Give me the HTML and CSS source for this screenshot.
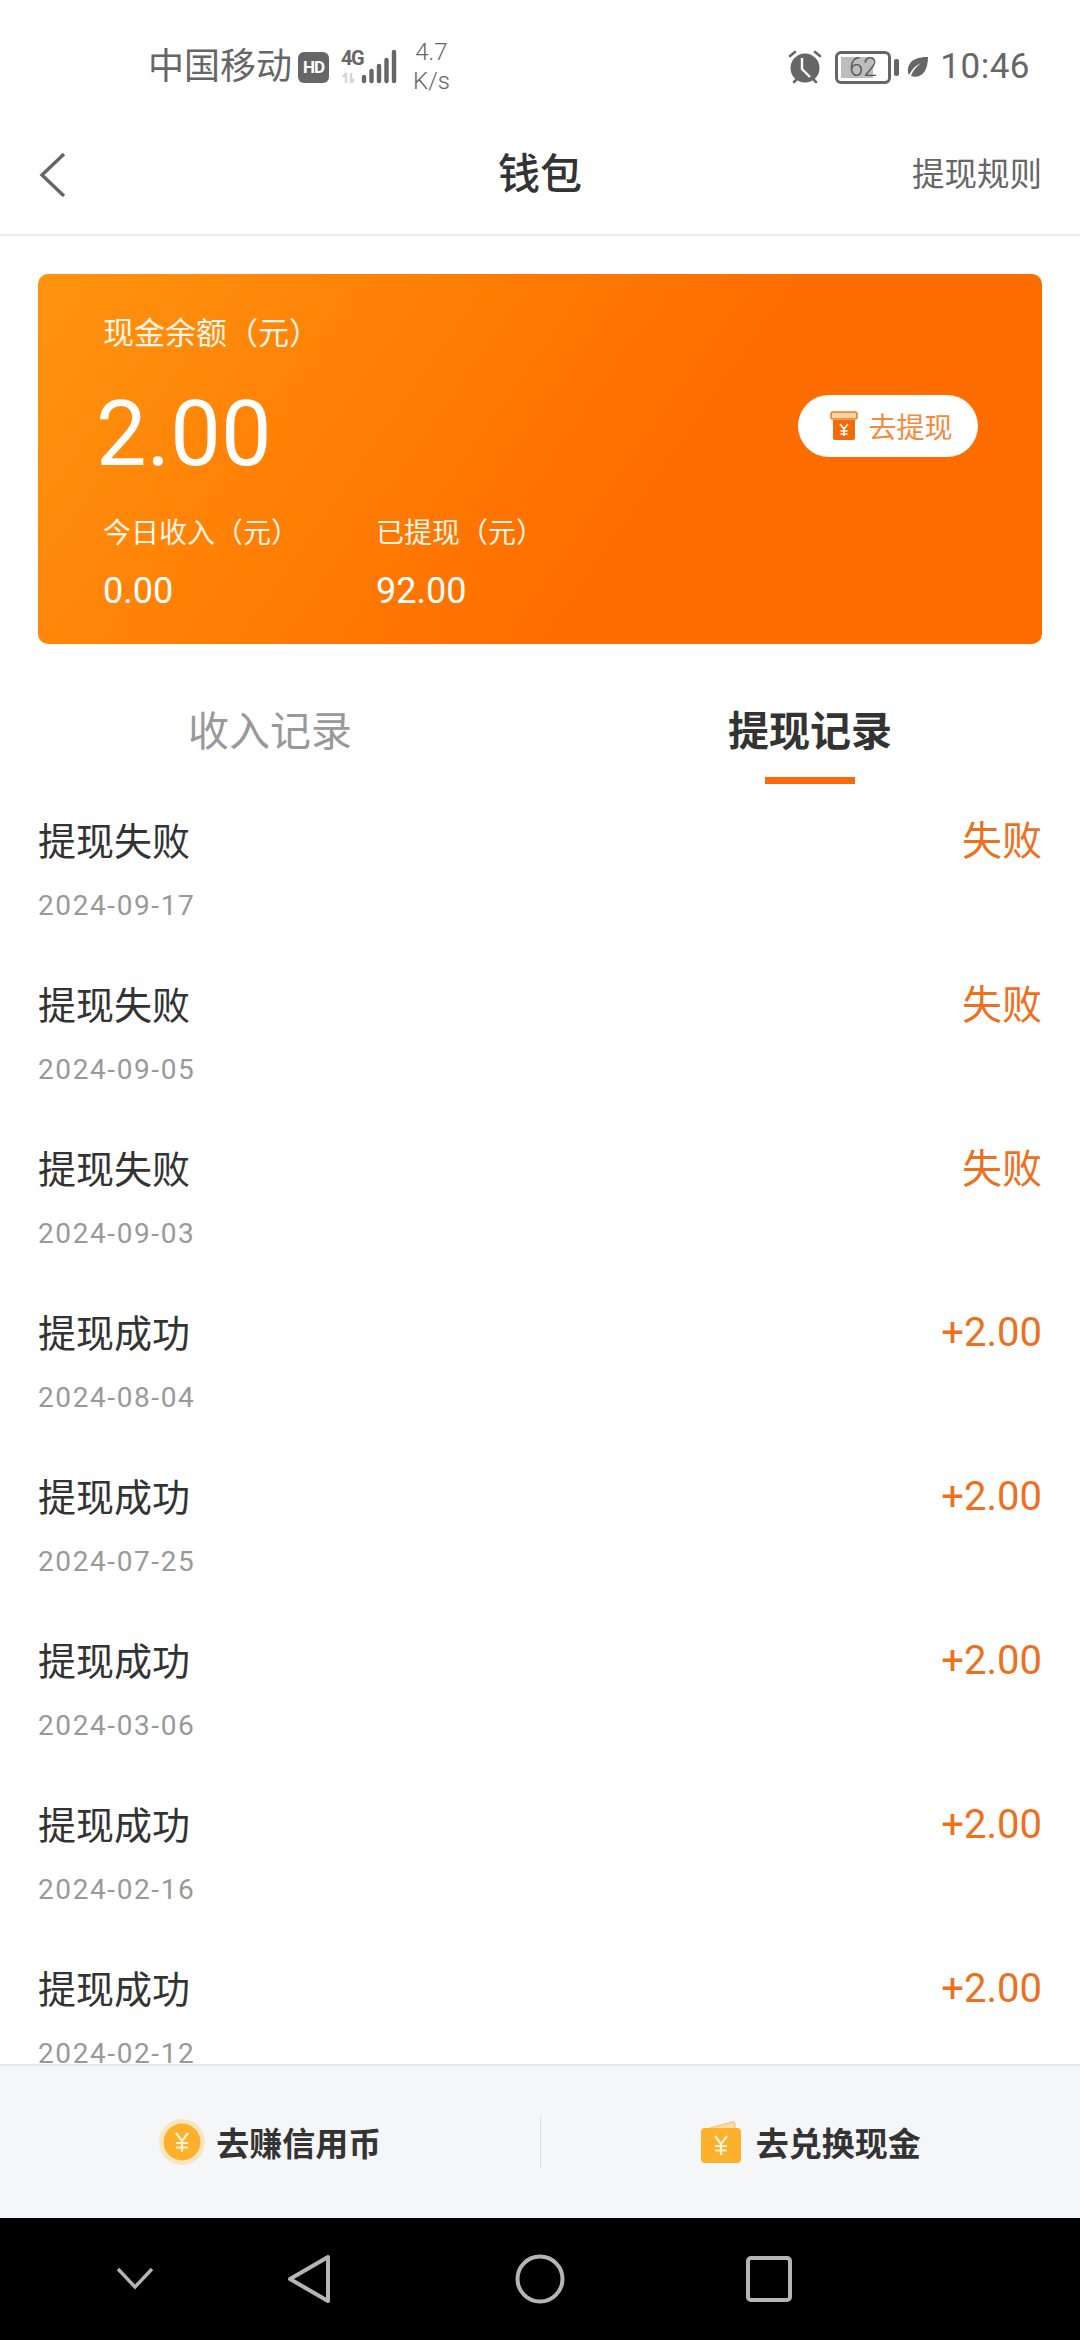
FILE: index.html
```html
<!DOCTYPE html>
<html lang="zh-CN">
    <head>
        <meta charset="UTF-8">
        <meta name="viewport" content="width=device-width, initial-scale=1.0">
        <title>钱包</title>
        <link rel="stylesheet" href="styles.css">
    </head>
    <body>
        <div class="page">
            <div class="status-bar">
                <div class="status-left">
                    <span class="carrier">中国移动</span>
                    <span class="hd-badge">HD</span>
                    <div class="signal">
                        <span class="signal-4g">4G</span>
                        <svg class="signal-arrows" width="14" height="12" viewBox="0 0 14 12">
                            <path d="M4 1v10M1 5l3-4M9 1v10M9 11l3-4" stroke="#d6d6d6" stroke-width="2.4" fill="none"/>
                        </svg>
                        <svg class="signal-bars" width="38" height="36" viewBox="0 0 38 36">
                            <g stroke="#666" stroke-width="4.4" stroke-linecap="round">
                                <path d="M4 28v4M11.500 22v10M19 17v15M26.500 11v21M34 3v29"/>
                            </g>
                        </svg>
                    </div>
                    <div class="net-speed"><span>4.7</span><span>K/s</span></div>
                </div>
                <div class="status-right">
                    <svg class="alarm" width="36" height="34" viewBox="0 0 36 34">
                        <circle cx="18" cy="18" r="14.500" fill="#666"/>
                        <path d="M3 6l5-4M33 6l-5-4M7 32l3-3M29 32l-3-3" stroke="#666" stroke-width="2.600" stroke-linecap="round"/>
                        <path d="M15 8v11l8 8" stroke="#fff" stroke-width="2.400" fill="none"/>
                    </svg>
                    <div class="battery">
                        <div class="battery-body">
                            <div class="battery-fill"></div>
                            <span class="battery-num">62</span>
                        </div>
                        <div class="battery-cap"></div>
                    </div>
                    <svg class="leaf" width="22" height="22" viewBox="0 0 22 22">
                        <path d="M21 1C12 1 3 3 1 12c-.5 3 0 5 1 7C5 13 9 9 14 7 10 10 6 14 4 20c5 2 11 0 14-5 2-4 3-9 3-14z" fill="#666"/>
                    </svg>
                    <span class="clock">10:46</span>
                </div>
            </div>

            <div class="nav-bar">
                <svg class="back-icon" width="28" height="46" viewBox="0 0 28 46">
                    <path d="M26 2L4 23l22 21" stroke="#666" stroke-width="3.400" fill="none"/>
                </svg>
                <div class="nav-title">钱包</div>
                <div class="nav-link">提现规则</div>
            </div>

            <div class="balance-card">
                <div class="balance-main">
                    <div>
                        <div class="balance-label">现金余额（元）</div>
                        <div class="balance-value">2.00</div>
                    </div>
                    <div class="withdraw-btn">
                        <svg width="28" height="30" viewBox="0 0 28 30">
                            <rect x="1" y="1" width="26" height="7" rx="2" fill="#fbd3a6" stroke="#f47a1c" stroke-width="1.500"/>
                            <path d="M3 9h22v18a2 2 0 0 1-2 2H5a2 2 0 0 1-2-2z" fill="#f26a0a"/>
                            <path d="M10 13l4 5 4-5M14 18v7M10.500 20h7M10.500 23h7" stroke="#fff" stroke-width="1.600" fill="none"/>
                        </svg>
                        <span>去提现</span>
                    </div>
                </div>
                <div class="balance-stats">
                    <div class="stat stat-today">
                        <div class="stat-label">今日收入（元）</div>
                        <div class="stat-value">0.00</div>
                    </div>
                    <div class="stat">
                        <div class="stat-label">已提现（元）</div>
                        <div class="stat-value">92.00</div>
                    </div>
                </div>
            </div>

            <div class="tabs">
                <div class="tab">收入记录</div>
                <div class="tab active">提现记录</div>
            </div>

            <div class="record-list">
                <div class="record">
                    <div class="record-top"><span class="record-title">提现失败</span><span class="record-amount">失败</span></div>
                    <div class="record-date">2024-09-17</div>
                </div>
                <div class="record">
                    <div class="record-top"><span class="record-title">提现失败</span><span class="record-amount">失败</span></div>
                    <div class="record-date">2024-09-05</div>
                </div>
                <div class="record">
                    <div class="record-top"><span class="record-title">提现失败</span><span class="record-amount">失败</span></div>
                    <div class="record-date">2024-09-03</div>
                </div>
                <div class="record">
                    <div class="record-top"><span class="record-title">提现成功</span><span class="record-amount plus">+2.00</span></div>
                    <div class="record-date">2024-08-04</div>
                </div>
                <div class="record">
                    <div class="record-top"><span class="record-title">提现成功</span><span class="record-amount plus">+2.00</span></div>
                    <div class="record-date">2024-07-25</div>
                </div>
                <div class="record">
                    <div class="record-top"><span class="record-title">提现成功</span><span class="record-amount plus">+2.00</span></div>
                    <div class="record-date">2024-03-06</div>
                </div>
                <div class="record">
                    <div class="record-top"><span class="record-title">提现成功</span><span class="record-amount plus">+2.00</span></div>
                    <div class="record-date">2024-02-16</div>
                </div>
                <div class="record">
                    <div class="record-top"><span class="record-title">提现成功</span><span class="record-amount plus">+2.00</span></div>
                    <div class="record-date">2024-02-12</div>
                </div>
            </div>

            <div class="bottom-bar">
                <div class="bottom-item">
                    <svg width="48" height="48" viewBox="0 0 48 48">
                        <circle cx="24" cy="24" r="23" fill="#f8e6c2"/>
                        <circle cx="24" cy="24" r="18.500" fill="#fdb02c"/>
                        <path d="M18 15l6 8 6-8M24 23v11M18 25h12M18 29.500h12" stroke="#fff3d6" stroke-width="2.200" fill="none"/>
                    </svg>
                    <span>去赚信用币</span>
                </div>
                <div class="bottom-divider"></div>
                <div class="bottom-item exchange">
                    <svg width="42" height="44" viewBox="0 0 42 44">
                        <path d="M3 10L32 2c2-.5 3 .5 3 2v6z" fill="#f9dca6" stroke="#f5bd5c" stroke-width="1"/>
                        <rect x="1" y="8" width="40" height="35" rx="4" fill="#fdb02c"/>
                        <path d="M15 16l6 8 6-8M21 24v11M15 26h12M15 30.500h12" stroke="#fff3d6" stroke-width="2.200" fill="none"/>
                    </svg>
                    <span>去兑换现金</span>
                </div>
            </div>

            <div class="system-nav">
                <svg class="sys-chevron" width="38" height="24" viewBox="0 0 38 24">
                    <path d="M2 3l17 18L36 3" stroke="#b5b5b5" stroke-width="3.400" fill="none"/>
                </svg>
                <svg class="sys-back" width="44" height="50" viewBox="0 0 44 50">
                    <path d="M41 3v44L3 25z" stroke="#b5b5b5" stroke-width="4" stroke-linejoin="round" fill="none"/>
                </svg>
                <svg class="sys-home" width="50" height="50" viewBox="0 0 50 50">
                    <circle cx="25" cy="25" r="22.500" stroke="#b5b5b5" stroke-width="4" fill="none"/>
                </svg>
                <svg class="sys-recent" width="46" height="46" viewBox="0 0 46 46">
                    <rect x="2" y="2" width="42" height="42" rx="3" stroke="#b5b5b5" stroke-width="4" fill="none"/>
                </svg>
            </div>
        </div>
    </body>
</html>
```

FILE: styles.css
```css
* {
    box-sizing: border-box;
}
body {
    margin: 0;
    background-color: #fff;
    font-family: Roboto, "Noto Sans CJK SC", sans-serif;
}
.page {
    width: 1080px;
    height: 2340px;
    display: flex;
    flex-direction: column;
    overflow: hidden;
}

/* status bar */
.status-bar {
    height: 130px;
    flex-shrink: 0;
    display: flex;
    justify-content: space-between;
    align-items: center;
    padding: 4px 50px 0 148px;
    color: #666;
}
.status-left,
.status-right {
    display: flex;
    align-items: center;
}
.carrier {
    font-size: 36px;
    line-height: 40px;
}
.hd-badge {
    width: 31px;
    height: 31px;
    margin-left: 6px;
    border-radius: 6px;
    background-color: #666;
    color: #fff;
    font-size: 17px;
    font-weight: 700;
    line-height: 31px;
    text-align: center;
    letter-spacing: -1px;
}
.signal {
    width: 55px;
    height: 36px;
    margin-left: 12px;
    position: relative;
}
.signal-4g {
    position: absolute;
    left: 0;
    top: -1px;
    font-size: 20px;
    font-weight: 700;
    line-height: 20px;
    letter-spacing: -1.5px;
}
.signal-arrows {
    position: absolute;
    left: 1px;
    bottom: 1px;
}
.signal-bars {
    position: absolute;
    right: -2px;
    top: 0;
}
.net-speed {
    display: flex;
    flex-direction: column;
    margin-left: 17px;
    font-size: 24px;
    line-height: 29px;
    font-weight: 300;
    align-items: center;
}
.alarm {
    margin-right: 12px;
}
.battery {
    display: flex;
    align-items: center;
}
.battery-body {
    width: 56px;
    height: 33px;
    border: 3px solid #666;
    border-radius: 6px;
    position: relative;
    padding: 3px;
}
.battery-fill {
    width: 32px;
    height: 100%;
    background-color: #bdbdbd;
}
.battery-num {
    position: absolute;
    left: 11px;
    top: 0;
    font-size: 25px;
    line-height: 27px;
    font-weight: 300;
    color: #555;
}
.battery-cap {
    width: 5px;
    height: 17px;
    margin-left: 3px;
    border-radius: 2px;
    background-color: #666;
}
.leaf {
    margin-left: 8px;
}
.clock {
    margin-left: 11px;
    font-size: 35px;
    line-height: 40px;
    letter-spacing: 0.5px;
}

/* nav bar */
.nav-bar {
    height: 106px;
    flex-shrink: 0;
    display: flex;
    align-items: center;
    justify-content: space-between;
    padding: 0 38px 14px 38px;
    border-bottom: 2px solid #ededed;
    position: relative;
}
.nav-title {
    position: absolute;
    left: 0;
    right: 0;
    top: 16px;
    text-align: center;
    font-size: 42px;
    line-height: 58px;
    font-weight: 500;
    color: #333;
}
.nav-link {
    font-size: 32.500px;
    line-height: 44px;
    color: #666;
}

/* balance card */
.balance-card {
    height: 370px;
    flex-shrink: 0;
    margin: 38px 38px 0;
    padding: 39px 64px 0 65px;
    border-radius: 10px;
    background: linear-gradient(125deg, #ff9410 0%, #ff7a02 40%, #ff6c00 62%, #ff6c00 100%);
    color: #fff;
}
.balance-main {
    display: flex;
    justify-content: space-between;
    align-items: flex-end;
}
.balance-label {
    font-size: 31px;
    line-height: 42px;
    color: #fff5e6;
}
.balance-value {
    margin-top: 26px;
    margin-left: -7px;
    font-size: 90px;
    line-height: 108px;
    font-weight: 400;
}
.withdraw-btn {
    width: 180px;
    height: 62px;
    margin-bottom: 32px;
    padding-left: 7px;
    border-radius: 31px;
    background-color: #fff;
    display: flex;
    align-items: center;
    justify-content: center;
    gap: 10px;
    color: #f58a3c;
    font-size: 28px;
}
.balance-stats {
    display: flex;
    margin-top: 26px;
}
.stat-today {
    width: 273px;
}
.stat-label {
    font-size: 28px;
    line-height: 38px;
    color: #fff5e6;
}
.stat-value {
    margin-top: 17px;
    font-size: 36px;
    line-height: 42px;
    font-weight: 400;
}

/* tabs */
.tabs {
    height: 140px;
    flex-shrink: 0;
    display: flex;
}
.tab {
    flex: 1;
    padding-top: 60px;
    text-align: center;
    font-size: 41px;
    line-height: 56px;
    color: #999;
    position: relative;
}
.tab.active {
    color: #333;
    font-weight: 700;
}
.tab.active::after {
    content: "";
    position: absolute;
    left: 50%;
    bottom: 0;
    width: 90px;
    height: 7px;
    margin-left: -45px;
    background-color: #f86a0c;
}

/* records */
.record-list {
    flex: 1;
    min-height: 0;
    overflow: hidden;
}
.record {
    height: 164px;
    padding: 30px 38px 0;
}
.record-top {
    display: flex;
    justify-content: space-between;
    align-items: center;
    height: 48px;
}
.record-title {
    font-size: 38px;
    color: #333;
}
.record-amount {
    font-size: 40px;
    color: #ee6f1c;
}
.record-amount.plus {
    padding-top: 5px;
}
.record-date {
    margin-top: 27px;
    font-size: 28px;
    line-height: 34px;
    color: #999;
    letter-spacing: 1.600px;
}

/* bottom bar */
.bottom-bar {
    height: 154px;
    flex-shrink: 0;
    display: flex;
    align-items: center;
    border-top: 2px solid #e8e8e8;
    background-color: #f5f6f8;
}
.bottom-item {
    flex: 1;
    display: flex;
    align-items: center;
    justify-content: center;
    gap: 10px;
    font-size: 33px;
    font-weight: 700;
    color: #333;
}
.bottom-item.exchange {
    gap: 14px;
}
.bottom-divider {
    width: 1px;
    height: 50px;
    background-color: #dcdcdc;
}

/* system nav */
.system-nav {
    height: 122px;
    flex-shrink: 0;
    background-color: #000;
    position: relative;
}
.system-nav svg {
    position: absolute;
}
.sys-chevron {
    left: 116px;
    top: 48px;
}
.sys-back {
    left: 287px;
    top: 36px;
}
.sys-home {
    left: 515px;
    top: 36px;
}
.sys-recent {
    left: 746px;
    top: 38px;
}
```
